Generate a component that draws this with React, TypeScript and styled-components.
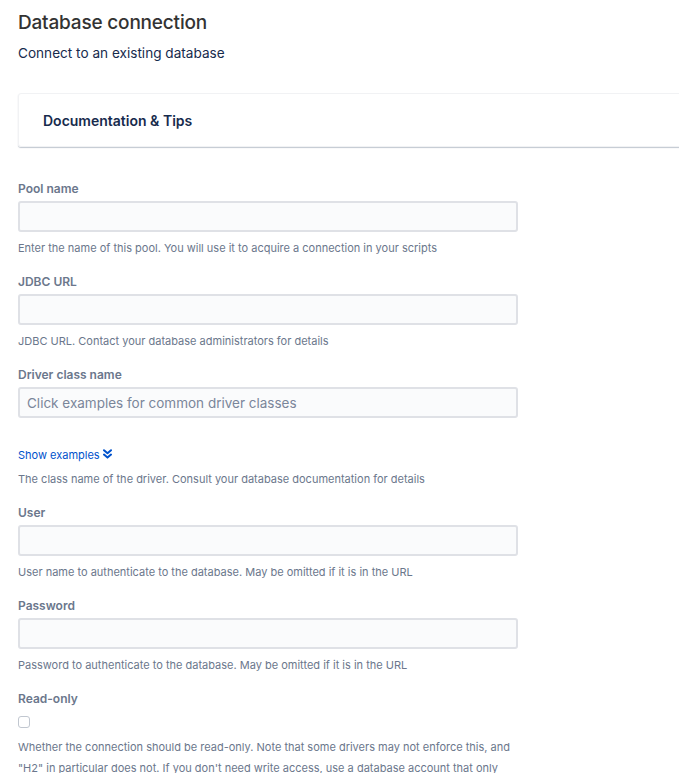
import React from 'react';
import styled, { createGlobalStyle } from 'styled-components';

const GlobalStyle = createGlobalStyle`
  html, body {
    margin: 0;
    padding: 0;
    background: #ffffff;
    overflow-x: hidden;
  }
  body {
    font-family: Inter, "Liberation Sans", sans-serif;
  }
`;

type FieldProps = {
  label: string;
  help: string;
  placeholder?: string;
  children?: React.ReactNode;
};

const Field = (props: FieldProps) => {
  return (
    <FieldBox>
      <Label>{props.label}</Label>
      <Input placeholder={props.placeholder} />
      {props.children}
      <Help>{props.help}</Help>
    </FieldBox>
  );
};

const ChevronsDown = () => (
  <svg width='9' height='10' viewBox='0 0 9 10'>
    <path d='M1 1.2 L4.5 4.2 L8 1.2' fill='none' stroke='#0052cc' strokeWidth='2' strokeLinecap='round' strokeLinejoin='round' />
    <path d='M1 5.6 L4.5 8.6 L8 5.6' fill='none' stroke='#0052cc' strokeWidth='2' strokeLinecap='round' strokeLinejoin='round' />
  </svg>
);

const App = () => {
  return (
    <Page>
      <GlobalStyle />
      <Title>Database connection</Title>
      <Subtitle>Connect to an existing database</Subtitle>
      <Card>
        <CardTitle>Documentation &amp; Tips</CardTitle>
      </Card>
      <Form>
        <Field
          label='Pool name'
          help='Enter the name of this pool. You will use it to acquire a connection in your scripts'
        />
        <Field label='JDBC URL' help='JDBC URL. Contact your database administrators for details' />
        <Field
          label='Driver class name'
          placeholder='Click examples for common driver classes'
          help='The class name of the driver. Consult your database documentation for details'
        >
          <ShowLink href='#'>
            Show examples <ChevronsDown />
          </ShowLink>
        </Field>
        <Field label='User' help='User name to authenticate to the database. May be omitted if it is in the URL' />
        <Field
          label='Password'
          help='Password to authenticate to the database. May be omitted if it is in the URL'
        />
        <FieldBox>
          <Label>Read-only</Label>
          <Check type='checkbox' />
          <LongHelp>
            Whether the connection should be read-only. Note that some drivers may not enforce this, and
            "H2" in particular does not. If you don't need write access, use a database account that only
            has read permissions.
          </LongHelp>
        </FieldBox>
      </Form>
    </Page>
  );
};

const Page = styled.div`
  padding: 11px 0 0 18px;
`;
const Title = styled.h1`
  margin: 0;
  font-size: 19px;
  font-weight: 500;
  line-height: 24px;
  color: #333333;
  letter-spacing: -0.01em;
`;
const Subtitle = styled.p`
  margin: 9px 0 0;
  font-size: 13.6px;
  line-height: 18px;
  color: #172b4d;
`;
const Card = styled.div`
  margin-top: 31px;
  width: 700px;
  height: 54px;
  box-sizing: border-box;
  border: 1px solid #f1f2f4;
  border-radius: 3px;
  box-shadow: 0 1px 1px rgba(9, 30, 66, 0.25);
  display: flex;
  align-items: center;
  padding-left: 24px;
`;
const CardTitle = styled.div`
  font-size: 14px;
  font-weight: 600;
  color: #172b4d;
`;
const Form = styled.div`
  margin-top: 34px;
  display: flex;
  flex-direction: column;
  gap: 19px;
`;
const FieldBox = styled.div`
  display: flex;
  flex-direction: column;
`;
const Label = styled.label`
  font-size: 12px;
  font-weight: 600;
  line-height: 16px;
  color: #6b778c;
  margin-bottom: 4px;
`;
const Input = styled.input`
  width: 500px;
  height: 31px;
  box-sizing: border-box;
  background: #fafbfc;
  border: 2px solid #dfe1e6;
  border-radius: 3px;
  padding: 0 7px;
  font-family: inherit;
  font-size: 13.5px;
  color: #172b4d;
  outline: none;
  &::placeholder {
    color: #7a869a;
  }
`;
const ShowLink = styled.a`
  margin: 30px 0 1px;
  font-size: 11px;
  line-height: 14px;
  color: #0052cc;
  text-decoration: none;
  display: inline-flex;
  align-items: center;
  gap: 3px;
  align-self: flex-start;
  svg {
    margin-top: -3px;
  }
`;
const Help = styled.div`
  margin-top: 9px;
  font-size: 11px;
  line-height: 14px;
  color: #6b778c;
`;
const Check = styled.input`
  margin: 5px 0 0;
  width: 12px;
  height: 12px;
  appearance: none;
  border: 1px solid #c1c7d0;
  border-radius: 3px;
  background: #ffffff;
`;
const LongHelp = styled.div`
  margin-top: 9px;
  width: 496px;
  font-size: 11px;
  line-height: 21px;
  color: #6b778c;
`;

export default App;
